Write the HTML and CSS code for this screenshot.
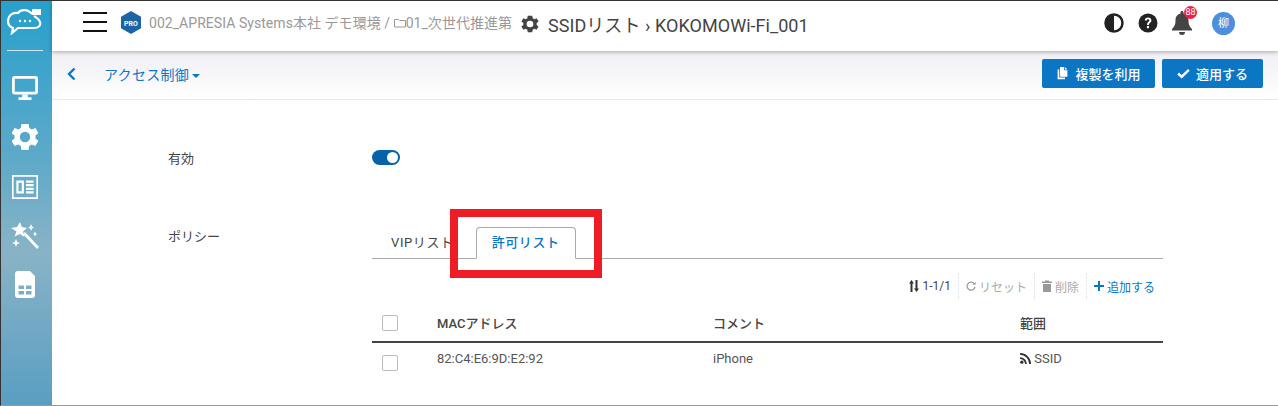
FILE: index.html
```html
<!DOCTYPE html>
<html lang="ja">

<head>
  <meta charset="UTF-8">
  <title>SSIDリスト</title>
  <link rel="stylesheet" href="styles.css">
</head>

<body>
  <div class="screen">
    <!-- Sidebar -->
    <nav class="sidebar">
      <svg class="logo" viewBox="7 9 36 26" fill="none" stroke="#fff" stroke-width="2.200">
        <path d="M32 14C28 9 21 9 18 13C12 12 8 16 8 21C8 25 10 27 13 28L12 33L18 28H34C39 28 41 25 40 22C39 19 37 18 34 16"/>
        <rect x="32" y="9" width="9" height="6" fill="#fff" stroke="none"/>
        <circle cx="20" cy="21" r="1.200" fill="#fff" stroke="none"/>
        <circle cx="25" cy="21" r="1.200" fill="#fff" stroke="none"/>
        <circle cx="30" cy="21" r="1.200" fill="#fff" stroke="none"/>
      </svg>
      <div class="side-line"></div>
      <svg class="side-icon icon-screen" viewBox="0 0 28 26" fill="#fff">
        <path fill-rule="evenodd" d="M3 0H25A3 3 0 0 1 28 3V17A3 3 0 0 1 25 20H3A3 3 0 0 1 0 17V3A3 3 0 0 1 3 0ZM3 3V17H25V3Z"/>
        <path d="M11 20H17V23H21V26H7V23H11Z"/>
      </svg>
      <svg class="side-icon icon-gear" viewBox="0 0 24 24" fill="#fff">
        <path d="M19.400 13a7.600 7.600 0 0 0 0-2l2.200-1.700-2.200-3.700-2.600 1a7.600 7.600 0 0 0-1.700-1L14.500 2.800h-5L9 5.600a7.600 7.600 0 0 0-1.700 1l-2.600-1-2.300 3.700L4.600 11a7.600 7.600 0 0 0 0 2l-2.200 1.700 2.300 3.700 2.600-1a7.600 7.600 0 0 0 1.700 1l.5 2.800h5l.5-2.800a7.600 7.600 0 0 0 1.700-1l2.600 1 2.200-3.700ZM12 15.700a3.700 3.700 0 1 1 0-7.400 3.700 3.700 0 0 1 0 7.400Z" transform="translate(-3.600 -3.600) scale(1.300)"/>
      </svg>
      <svg class="side-icon icon-news" viewBox="0 0 24 24" fill="#fff">
        <path fill-rule="evenodd" d="M0 1H24V23H0ZM1.500 2.500V21.500H22.500V2.500Z"/>
        <path fill-rule="evenodd" d="M4 6H11V18H4ZM6 8V16H9V8Z"/>
        <path d="M13 6H20V8H13ZM13 9.300H20V11.300H13ZM13 12.700H20V14.700H13ZM13 16H20V18H13Z"/>
      </svg>
      <svg class="side-icon icon-wand" viewBox="0 0 28 28" fill="#fff">
        <path d="M9 0L10.800 5L16 6L12 9.500L13.500 15L9 12L3.500 14.500L5.500 9.500L0 6L6 5Z"/>
        <path d="M12 12L14 10L28 25L26 27Z"/>
        <path d="M20 2L21 4.500L23 5.500L21 6.500L20 9L19 6.500L17 5.500L19 4.500Z"/>
        <path d="M24 9.500L24.800 11.200L26 12L24.800 12.800L24 14.500L23.200 12.800L22 12L23.200 11.200Z"/>
        <path d="M5 17L6.200 20L9 21L6.200 22L5 25L3.800 22L1 21L3.800 20Z"/>
      </svg>
      <svg class="side-icon icon-sim" viewBox="0 0 20 27" fill="#fff">
        <path fill-rule="evenodd" d="M3 0H15L20 5V24A3 3 0 0 1 17 27H3A3 3 0 0 1 0 24V3A3 3 0 0 1 3 0ZM3.500 14.500V18H9V14.500ZM11 14.500V18H16.500V14.500ZM3.500 20V23.500H9V20ZM11 20V23.500H16.500V20Z"/>
      </svg>
    </nav>

    <div class="main">
      <!-- Top header -->
      <header class="topbar">
        <div class="burger"><span></span><span></span><span></span></div>
        <svg class="pro" viewBox="0 0 20 23">
          <path d="M10 0L20 5.700V17.300L10 23L0 17.300V5.700Z" fill="#1c64a4"/>
          <text x="10" y="14.500" text-anchor="middle">PRO</text>
        </svg>
        <div class="crumb">002_APRESIA Systems本社 デモ環境 /
          <svg class="folder" viewBox="0 0 12 10" fill="none" stroke="#999" stroke-width="1"><path d="M.5 1.500H4.500L5.500 2.500H11.500V9H.5Z"/></svg>01_次世代推進第</div>
        <svg class="title-gear" viewBox="0 0 24 24" fill="#444">
          <path d="M19.400 13a7.600 7.600 0 0 0 0-2l2.200-1.700-2.200-3.700-2.600 1a7.600 7.600 0 0 0-1.700-1L14.500 2.800h-5L9 5.600a7.600 7.600 0 0 0-1.700 1l-2.600-1-2.300 3.700L4.600 11a7.600 7.600 0 0 0 0 2l-2.200 1.700 2.300 3.700 2.600-1a7.600 7.600 0 0 0 1.700 1l.5 2.800h5l.5-2.800a7.600 7.600 0 0 0 1.700-1l2.600 1 2.200-3.700ZM12 15.700a3.700 3.700 0 1 1 0-7.400 3.700 3.700 0 0 1 0 7.400Z" transform="translate(-2.400 -2.400) scale(1.200)"/>
        </svg>
        <h1 class="title">SSIDリスト › KOKOMOWi-Fi_001</h1>
        <div class="top-icons">
          <svg class="top-icon" viewBox="0 0 20 20">
            <circle cx="10" cy="10" r="8.500" fill="#fff" stroke="#222" stroke-width="2.500"/>
            <path d="M10 1.500A8.500 8.500 0 0 0 10 18.500Z" fill="#222"/>
          </svg>
          <svg class="top-icon" viewBox="0 0 20 20">
            <circle cx="10" cy="10" r="9.500" fill="#222"/>
            <path d="M6.800 7.600C6.800 5.800 8.200 4.500 10.100 4.500C12 4.500 13.400 5.700 13.400 7.400C13.400 9.700 10.900 9.700 10.900 11.900H9C9 8.900 11.300 8.900 11.300 7.500C11.300 6.800 10.800 6.300 10.100 6.300C9.300 6.300 8.800 6.900 8.800 7.600Z" fill="#fff"/>
            <rect x="8.900" y="13" width="2.100" height="2.200" fill="#fff"/>
          </svg>
          <div class="bell">
            <svg viewBox="0 0 20 24" fill="#444">
              <path d="M10 0C11 0 11.500.7 11.500 1.700V2.500C15 3.300 16.500 6 16.500 9.500C16.500 14 18 16 20 18V19.500H0V18C2 16 3.500 14 3.500 9.500C3.500 6 5 3.300 8.500 2.500V1.700C8.500.7 9 0 10 0Z"/>
              <path d="M7 21H13A3 3 0 0 1 7 21Z"/>
            </svg>
            <span class="badge">88</span>
          </div>
          <div class="avatar">柳</div>
        </div>
      </header>

      <!-- Sub header -->
      <div class="subbar">
        <svg class="back" viewBox="0 0 9 14" fill="none" stroke="#0b77c4" stroke-width="2.400"><path d="M7.500 1.500L2 7L7.500 12.500"/></svg>
        <div class="sub-menu">アクセス制御<span class="caret"></span></div>
        <div class="sub-actions">
          <button class="btn">
            <svg viewBox="0 0 14 16" fill="#fff"><path d="M4 0H9V4H13V12H4Z"/><path d="M10 0L13 3H10Z"/><path d="M1 3H3V13H10V15H1Z"/></svg>
            複製を利用
          </button>
          <button class="btn btn-apply">
            <svg viewBox="0 0 14 11" fill="none" stroke="#fff" stroke-width="2.600"><path d="M1.200 5.500L5 9L12.800 1.500"/></svg>
            適用する
          </button>
        </div>
      </div>

      <!-- Form -->
      <div class="content">
        <div class="row row-enable">
          <div class="row-label">有効</div>
          <div class="toggle"><span></span></div>
        </div>
        <div class="row">
          <div class="row-label row-label-policy">ポリシー</div>
          <div class="policy">
            <div class="tabs">
              <div class="tab">VIPリスト</div>
              <div class="tab tab-active">許可リスト</div>
            </div>
            <div class="toolbar">
              <span class="tool tool-count">
                <svg viewBox="0 0 10 12" fill="#333"><path d="M2.500 0L5 3.500H3.500V12H1.500V3.500H0Z"/><path d="M7.500 12L5 8.500H6.500V0H8.500V8.500H10Z"/></svg>
                1-1/1
              </span>
              <span class="tool tool-off">
                <svg viewBox="0 0 12 12" fill="none" stroke="#999" stroke-width="1.500"><path d="M9.800 3.200A4.800 4.800 0 1 0 10.800 7"/><path d="M11.500 1V4.500H8Z" fill="#999" stroke="none"/></svg>
                リセット
              </span>
              <span class="tool tool-off">
                <svg viewBox="0 0 10 12" fill="#999"><path d="M0 1.500H3V.5H7V1.500H10V3H0Z"/><path d="M1 4H9V12H1Z"/></svg>
                削除
              </span>
              <span class="tool tool-add">
                <svg viewBox="0 0 10 10" fill="#0b77c4"><path d="M4 0H6V4H10V6H6V10H4V6H0V4H4Z"/></svg>
                追加する
              </span>
            </div>
            <table class="mac-table">
              <thead>
                <tr>
                  <th class="col-check"><span class="check"></span></th>
                  <th class="col-mac">MACアドレス</th>
                  <th class="col-comment">コメント</th>
                  <th>範囲</th>
                </tr>
              </thead>
              <tbody>
                <tr>
                  <td class="col-check"><span class="check check-row"></span></td>
                  <td>82:C4:E6:9D:E2:92</td>
                  <td>iPhone</td>
                  <td>
                    <svg class="rss" viewBox="0 0 12 12" fill="#333"><circle cx="2" cy="10" r="1.800"/><path d="M0 4.500A7.500 7.500 0 0 1 7.500 12H5.500A5.500 5.500 0 0 0 0 6.500Z"/><path d="M0 0A12 12 0 0 1 12 12H10A10 10 0 0 0 0 2Z"/></svg>
                    SSID
                  </td>
                </tr>
              </tbody>
            </table>
          </div>
        </div>
      </div>
    </div>

    <!-- Red annotation over the tab -->
    <div class="highlight"></div>
  </div>
</body>

</html>
```

FILE: styles.css
```css
html,
body {
  margin: 0;
  padding: 0;
}

body {
  font-family: Roboto, "Noto Sans CJK JP", sans-serif;
  color: #444;
  background: #fff;
}

.screen {
  position: relative;
  display: flex;
  width: 1278px;
  height: 406px;
  box-sizing: border-box;
  border-top: 1px solid #333;
  border-left: 1px solid #333;
  border-bottom: 1px solid #999;
  overflow: hidden;
}

/* Sidebar */
.sidebar {
  display: flex;
  flex-direction: column;
  align-items: center;
  flex: none;
  box-sizing: border-box;
  width: 51px;
  padding-right: 3px;
  background: linear-gradient(#27a0cc, #5ca9c9 38%, #89b3c6 62%, #5a9ec3);
}

.logo {
  width: 36px;
  height: 26px;
  margin-top: 8px;
}

.side-line {
  width: 36px;
  height: 1px;
  margin-top: 15px;
  background: #cfe6f0;
}

.side-icon {
  width: 26px;
  height: 26px;
}

.icon-screen {
  margin-top: 24px;
}

.icon-gear {
  margin-top: 23px;
}

.icon-news {
  margin-top: 24px;
}

.icon-wand {
  width: 28px;
  height: 28px;
  margin-top: 22px;
}

.icon-sim {
  width: 20px;
  height: 27px;
  margin-top: 21px;
}

.main {
  flex: 1;
  min-width: 0;
}

/* Top header */
.topbar {
  position: relative;
  z-index: 1;
  display: flex;
  align-items: center;
  box-sizing: border-box;
  height: 50px;
  padding-bottom: 4px;
  background: #fff;
  box-shadow: 0 1px 4px rgba(0, 0, 0, 0.3);
}

.burger {
  display: flex;
  flex-direction: column;
  gap: 7px;
  width: 24px;
  margin-left: 31px;
  margin-bottom: 4px;
}

.burger span {
  height: 2px;
  background: #111;
}

.pro {
  flex: none;
  width: 20px;
  height: 23px;
  margin-left: 14px;
  margin-bottom: 4px;
}

.pro text {
  font-size: 7px;
  font-weight: 700;
  fill: #fff;
}

.crumb {
  flex: none;
  width: 361px;
  margin-left: 8px;
  margin-bottom: 4px;
  margin-right: 2px;
  white-space: nowrap;
  font-size: 14px;
  letter-spacing: 0.05px;
  color: #999;
}

.folder {
  width: 12px;
  height: 10px;
}

.title-gear {
  flex: none;
  width: 18px;
  height: 18px;
  margin-left: 9px;
}

.title {
  margin: 0 0 0 9px;
  font-size: 18px;
  font-weight: 400;
  letter-spacing: 0.05px;
  white-space: nowrap;
  color: #444;
}

.top-icons {
  display: flex;
  align-items: center;
  margin-left: auto;
  margin-right: 43px;
  margin-bottom: 2px;
}

.top-icon {
  width: 20px;
  height: 20px;
  margin-right: 14px;
}

.bell {
  position: relative;
  width: 20px;
  height: 24px;
}

.badge {
  position: absolute;
  top: -5px;
  left: 12px;
  width: 13px;
  height: 13px;
  border-radius: 50%;
  background: #ee2040;
  color: #fff;
  font-size: 9px;
  line-height: 13px;
  text-align: center;
}

.avatar {
  width: 23px;
  height: 23px;
  margin-left: 20px;
  border-radius: 50%;
  background: #4d8fdc;
  color: #fff;
  font-size: 11px;
  line-height: 23px;
  text-align: center;
}

/* Sub header */
.subbar {
  display: flex;
  align-items: center;
  box-sizing: border-box;
  height: 49px;
  padding-bottom: 3px;
  border-bottom: 1px solid #e8e8e8;
  background: linear-gradient(#efeff5, #fff);
}

.back {
  width: 9px;
  height: 14px;
  margin-left: 15px;
}

.sub-menu {
  margin-left: 28px;
  font-size: 14px;
  letter-spacing: 0.3px;
  color: #0b77c4;
}

.caret {
  display: inline-block;
  margin-left: 3px;
  vertical-align: 2px;
  border-top: 4px solid #0b77c4;
  border-left: 4px solid transparent;
  border-right: 4px solid transparent;
}

.sub-actions {
  display: flex;
  gap: 7px;
  margin-left: auto;
  margin-right: 15px;
}

.btn {
  display: flex;
  align-items: center;
  justify-content: center;
  gap: 6px;
  width: 113px;
  height: 29px;
  padding: 0;
  border: none;
  border-radius: 2px;
  background: #0b77c4;
  color: #fff;
  font-family: inherit;
  font-size: 13px;
  font-weight: 500;
}

.btn-apply {
  width: 101px;
}

.btn svg {
  width: 13px;
  height: 13px;
}

/* Form */
.row {
  display: flex;
}

.row-enable {
  align-items: center;
  height: 24px;
  margin-top: 45px;
}

.row-label {
  flex: none;
  width: 204px;
  margin-left: 116px;
  font-size: 13px;
}

.row-label-policy {
  margin-top: 57px;
}

.toggle {
  position: relative;
  width: 28px;
  height: 15px;
  border-radius: 8px;
  background: #0862a8;
}

.toggle span {
  position: absolute;
  top: 2px;
  right: 2px;
  width: 11px;
  height: 11px;
  border-radius: 50%;
  background: #fff;
}

.policy {
  width: 791px;
  margin-top: 58px;
}

.tabs {
  display: flex;
  align-items: flex-end;
  height: 31px;
  padding-left: 4px;
  border-bottom: 1px solid #aaa;
}

.tab {
  padding: 0 15px;
  font-size: 13px;
  letter-spacing: 0.6px;
  line-height: 30px;
  color: #444;
}

.tab-active {
  margin-left: 7px;
  margin-bottom: -1px;
  border: 1px solid #aaa;
  border-bottom: 1px solid #fff;
  border-radius: 4px 4px 0 0;
  color: #0b77c4;
  font-weight: 500;
}

.toolbar {
  display: flex;
  justify-content: flex-end;
  align-items: center;
  height: 28px;
  margin-top: 13px;
  font-size: 12px;
}

.tool {
  display: flex;
  align-items: center;
  gap: 3px;
  height: 26px;
  padding: 0 7px;
  border-right: 1px dotted #ddd;
}

.tool svg {
  width: 10px;
  height: 12px;
}

.tool-off {
  color: #aaa;
}

.tool-add {
  padding-right: 8px;
  border-right: none;
  color: #0b77c4;
}

.tool-add svg {
  height: 10px;
}

.mac-table {
  width: 100%;
  border-collapse: collapse;
  table-layout: fixed;
  font-size: 13px;
}

.mac-table th {
  height: 37px;
  padding: 4px 0 0;
  border-bottom: 2px solid #444;
  font-weight: 500;
  text-align: left;
}

.mac-table td {
  height: 30px;
  padding: 0 0 4px;
  color: #555;
}

.col-check {
  width: 65px;
}

.col-mac {
  width: 276px;
}

.col-comment {
  width: 307px;
}

.check {
  display: block;
  width: 14px;
  height: 14px;
  margin-left: 10px;
  border: 1px solid #bbb;
  border-radius: 2px;
}

.check-row {
  margin-top: 10px;
}

.rss {
  width: 11px;
  height: 11px;
  vertical-align: -1px;
}

/* Annotation */
.highlight {
  position: absolute;
  left: 449px;
  top: 208px;
  width: 136px;
  height: 53px;
  border: 8px solid #ee1c25;
}
```
